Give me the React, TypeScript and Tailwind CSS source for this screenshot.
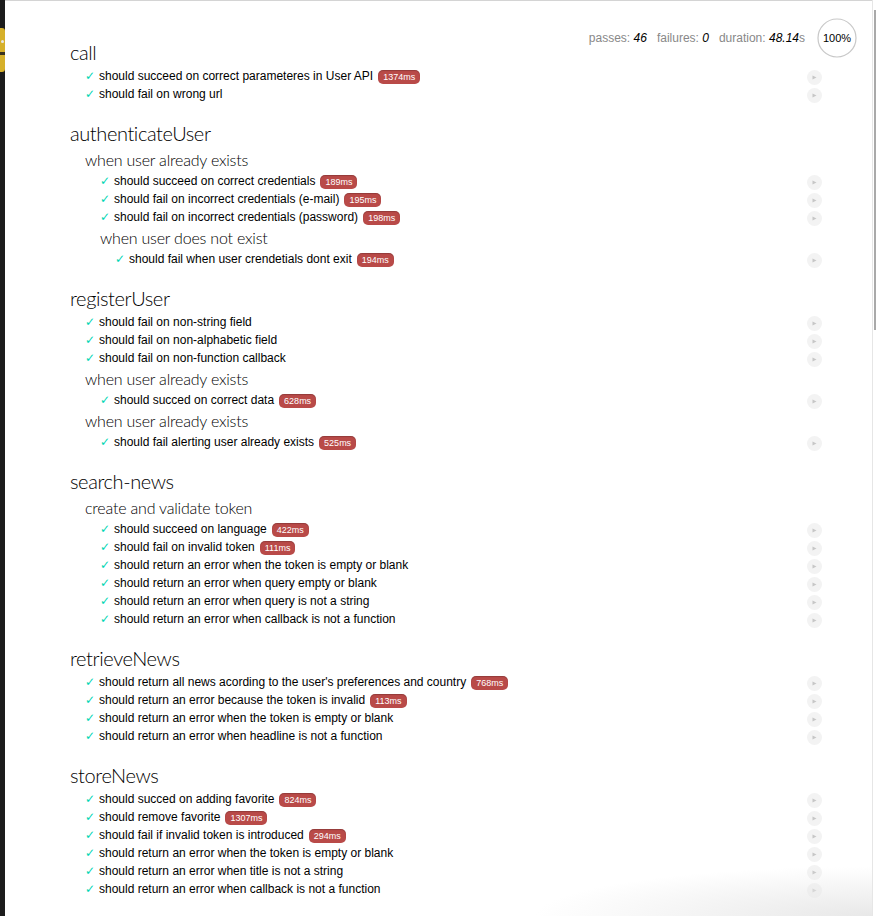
import React from 'react';

type Test = { t: string; d?: string };
type Suite = { title: string; tests?: Test[]; suites?: Suite[] };

const report: Suite[] = [
  {
    title: 'call',
    tests: [
      { t: 'should succeed on correct parameteres in User API', d: '1374ms' },
      { t: 'should fail on wrong url' },
    ],
  },
  {
    title: 'authenticateUser',
    suites: [
      {
        title: 'when user already exists',
        tests: [
          { t: 'should succeed on correct credentials', d: '189ms' },
          { t: 'should fail on incorrect credentials (e-mail)', d: '195ms' },
          { t: 'should fail on incorrect credentials (password)', d: '198ms' },
        ],
        suites: [
          {
            title: 'when user does not exist',
            tests: [{ t: 'should fail when user crendetials dont exit', d: '194ms' }],
          },
        ],
      },
    ],
  },
  {
    title: 'registerUser',
    tests: [
      { t: 'should fail on non-string field' },
      { t: 'should fail on non-alphabetic field' },
      { t: 'should fail on non-function callback' },
    ],
    suites: [
      { title: 'when user already exists', tests: [{ t: 'should succed on correct data', d: '628ms' }] },
      { title: 'when user already exists', tests: [{ t: 'should fail alerting user already exists', d: '525ms' }] },
    ],
  },
  {
    title: 'search-news',
    suites: [
      {
        title: 'create and validate token',
        tests: [
          { t: 'should succeed on language', d: '422ms' },
          { t: 'should fail on invalid token', d: '111ms' },
          { t: 'should return an error when the token is empty or blank' },
          { t: 'should return an error when query empty or blank' },
          { t: 'should return an error when query is not a string' },
          { t: 'should return an error when callback is not a function' },
        ],
      },
    ],
  },
  {
    title: 'retrieveNews',
    tests: [
      { t: "should return all news acording to the user's preferences and country", d: '768ms' },
      { t: 'should return an error because the token is invalid', d: '113ms' },
      { t: 'should return an error when the token is empty or blank' },
      { t: 'should return an error when headline is not a function' },
    ],
  },
  {
    title: 'storeNews',
    tests: [
      { t: 'should succed on adding favorite', d: '824ms' },
      { t: 'should remove favorite', d: '1307ms' },
      { t: 'should fail if invalid token is introduced', d: '294ms' },
      { t: 'should return an error when the token is empty or blank' },
      { t: 'should return an error when title is not a string' },
      { t: 'should return an error when callback is not a function' },
    ],
  },
];

function TestRow({ test }: { test: Test }) {
  return (
    <li className="relative ml-[15px] h-[18px] text-[12px] leading-[18px] text-black">
      <span className="float-left mr-[5px] w-[9px] text-[#00d6b2] font-['DejaVu_Sans',sans-serif] leading-[18px]">✓</span>
      {test.t}
      {test.d && (
        <span className="ml-[5px] rounded-[5px] bg-[#b94a48] px-[5px] py-[2px] text-[9px] leading-none text-white shadow-[inset_0_1px_1px_rgba(0,0,0,0.2)]">
          {test.d}
        </span>
      )}
      {/* replay */}
      <span className="absolute right-0 top-[3px] flex h-[15px] w-[15px] items-center justify-center rounded-full bg-[#f3f3f3]">
        <svg width="5" height="5" viewBox="0 0 5 5">
          <polygon points="0.5,0.5 4.5,2.5 0.5,4.5" fill="#c6c6c6" />
        </svg>
      </span>
    </li>
  );
}

function SuiteBlock({ suite, nested }: { suite: Suite; nested?: boolean }) {
  return (
    <li className="ml-[15px]">
      <h1
        className={
          nested
            ? "h-[24px] text-[16px] leading-[24px] tracking-[-0.2px] font-light font-['Lato',sans-serif] text-black"
            : "mt-[15px] h-[30px] text-[20px] leading-[30px] tracking-[-0.4px] font-light font-['Lato',sans-serif] text-black"
        }
      >
        {suite.title}
      </h1>
      <ul>
        {suite.tests?.map((t, i) => <TestRow key={i} test={t} />)}
        {suite.suites?.map((s, i) => <SuiteBlock key={i} suite={s} nested />)}
      </ul>
    </li>
  );
}

export default function App() {
  return (
    <div className="relative flex h-[916px] w-[877px] overflow-hidden bg-white font-['Liberation_Sans',Arial,sans-serif]">
      {/* desktop edge */}
      <div className="relative w-[5px] shrink-0 bg-[#1c1c1c]">
        <div className="absolute left-0 top-[28px] h-[44px] w-[5px] rounded-r-[3px] bg-[#d6b02a]" />
        <div className="absolute left-0 top-[52px] h-[3px] w-[5px] bg-[#3a3220]" />
        <div className="absolute left-[1px] top-[40px] h-[3px] w-[3px] rounded-full bg-[#e6e6e6]" />
      </div>

      <div className="relative flex-1 border-t border-[#d4d4d4] px-[50px] pt-[21px]">
        {/* stats */}
        <div className="absolute right-[15px] top-[17px] flex h-[40px] items-center text-[12px] text-[#888]">
          <span className="mx-[5px]">
            passes: <em className="text-black">46</em>
          </span>
          <span className="mx-[5px]">
            failures: <em className="text-black">0</em>
          </span>
          <span className="mx-[5px]">
            duration: <em className="text-black">48.14</em>s
          </span>
          <div className="relative ml-[7px] flex h-[40px] w-[40px] items-center justify-center">
            <svg className="absolute inset-0" width="40" height="40" viewBox="0 0 40 40">
              <circle cx="20" cy="20" r="19" fill="none" stroke="#c8c8c8" strokeWidth="1.2" />
            </svg>
            <span className="relative text-[11px] text-black">100%</span>
          </div>
        </div>

        <ul>
          {report.map((s, i) => (
            <SuiteBlock key={i} suite={s} />
          ))}
        </ul>

        <div className="pointer-events-none absolute bottom-0 right-0 h-[50px] w-[340px] bg-[radial-gradient(ellipse_at_bottom_right,#e8e8e8,rgba(255,255,255,0)_70%)]" />
      </div>

      {/* scrollbar */}
      <div className="relative w-[5px] shrink-0 border-l border-[#e6e6e6] bg-white">
        <div className="absolute right-[1px] top-[10px] h-[320px] w-[2px] bg-[#a9a9a9]" />
      </div>
    </div>
  );
}
